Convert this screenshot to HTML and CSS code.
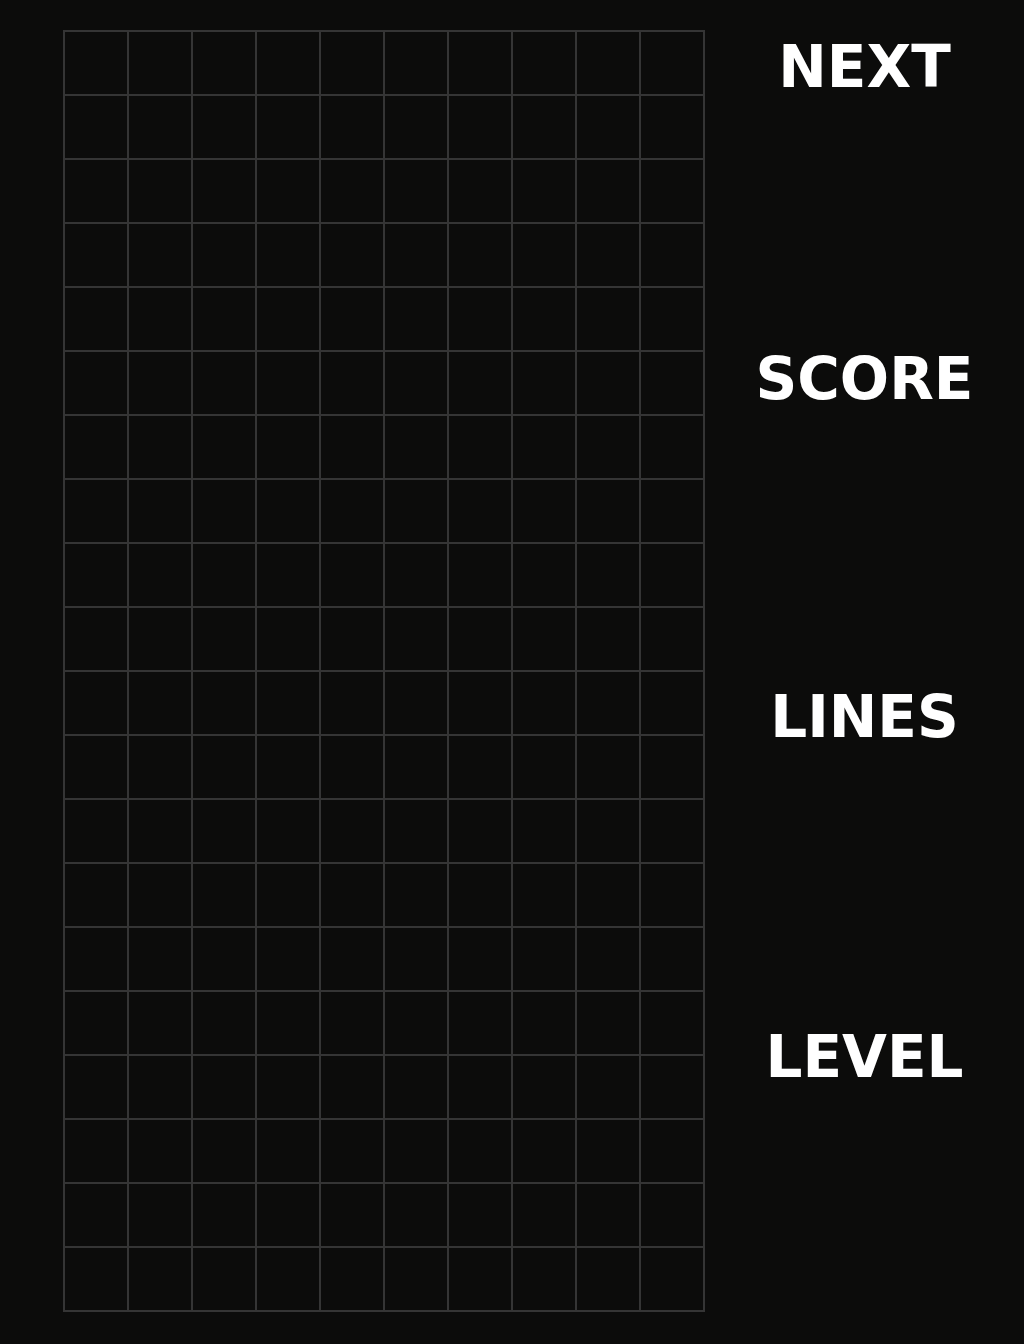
FILE: index.html
```html
<!DOCTYPE html>
<html lang="en">
  <head>
    <meta charset="UTF-8" />
    <meta name="viewport" content="width=device-width, initial-scale=1.0" />
    <title>Tetris</title>
    <link rel="stylesheet" href="styles.css">
  </head>
  <body>
    <div class="game">
      <div id="board" class="board"></div>
      <div class="panel">
        <div class="stat stat-next">
          <h2>NEXT</h2>
          <div class="value" id="next"></div>
        </div>
        <div class="stat stat-score">
          <h2>SCORE</h2>
          <div class="value" id="score"></div>
        </div>
        <div class="stat stat-lines">
          <h2>LINES</h2>
          <div class="value" id="lines"></div>
        </div>
        <div class="stat stat-level">
          <h2>LEVEL</h2>
          <div class="value" id="level"></div>
        </div>
      </div>
    </div>

    <script>
      let board = document.querySelector("#board");
      for (let i = 0; i < 200; i++) {
        let cell = document.createElement("div");
        cell.className = "cell";
        board.appendChild(cell);
      }
    </script>
  </body>
</html>
```

FILE: styles.css
```css
* {
  margin: 0;
  padding: 0;
  box-sizing: border-box;
}
html,
body {
  background: #0c0c0b;
}
body {
  font-family: "DejaVu Sans", sans-serif;
  color: #fff;
}
.game {
  display: flex;
  padding: 30px 0 0 63px;
}
.board {
  display: grid;
  grid-template-columns: repeat(10, 62px);
  grid-template-rows: repeat(20, 62px);
  gap: 2px;
  padding: 2px;
  width: 642px;
  height: 1282px;
  background: #353535;
}
.board .cell {
  background: #0c0c0b;
}
.panel {
  flex: 1;
  padding-top: 2px;
  text-align: center;
}
.stat h2 {
  font-size: 58px;
  font-weight: bold;
  line-height: 70px;
}
.stat-next {
  height: 312px;
}
.stat-score {
  height: 338px;
}
.stat-lines {
  height: 340px;
}
```
